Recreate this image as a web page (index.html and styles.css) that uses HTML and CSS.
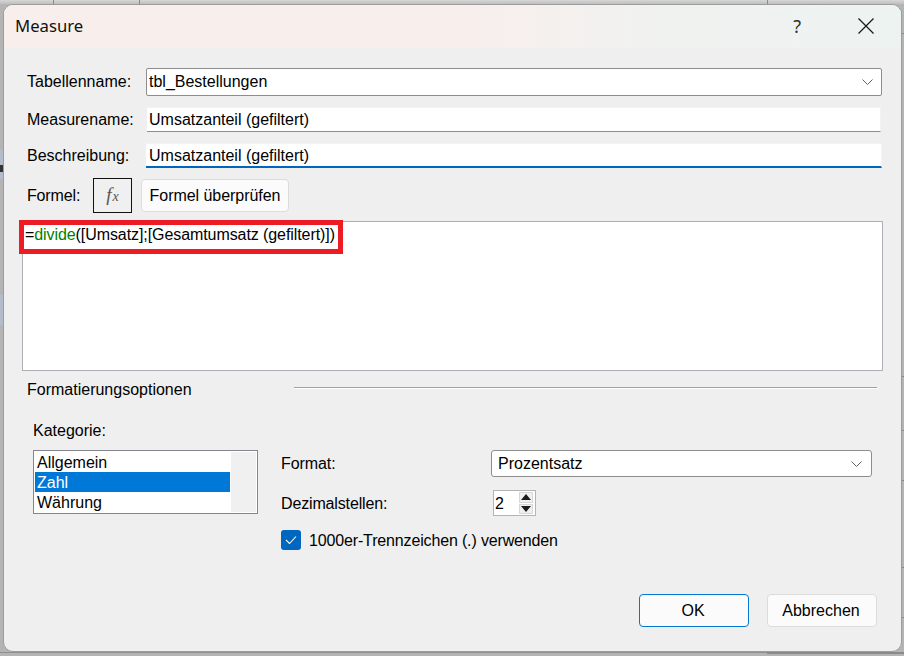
FILE: index.html
```html
<!DOCTYPE html>
<html lang="de">
<head>
<meta charset="utf-8">
<title>Measure</title>
<link rel="stylesheet" href="styles.css">
</head>
<body>
<div class="dialog">
  <header class="titlebar">
    <span class="title">Measure</span>
    <span class="help">?</span>
    <svg class="close" width="16" height="16" viewBox="0 0 16 16"><path d="M.5.5l15 15M15.5.5l-15 15" fill="none" stroke="#1c1c1c" stroke-width="1.3"/></svg>
  </header>
  <main class="form">
    <div class="row row-table">
      <label class="label">Tabellenname:</label>
      <div class="combo combo-wide">
        <span>tbl_Bestellungen</span>
        <svg class="chev" width="11" height="6" viewBox="0 0 11 6"><path d="M.5.5l5 5 5-5" fill="none" stroke="#606060"/></svg>
      </div>
    </div>
    <div class="row row-input">
      <label class="label">Measurename:</label>
      <div class="input">Umsatzanteil (gefiltert)</div>
    </div>
    <div class="row row-input">
      <label class="label">Beschreibung:</label>
      <div class="input input-focus">Umsatzanteil (gefiltert)</div>
    </div>
    <div class="row row-formula">
      <label class="label label-formula">Formel:</label>
      <div class="fx-btn"><span class="fx-f">f</span><span class="fx-x">x</span></div>
      <div class="btn btn-check">Formel überprüfen</div>
    </div>
    <div class="editor">
      <div class="code">=<span class="fn">divide</span>([Umsatz];[Gesamtumsatz (gefiltert)])</div>
      <div class="highlight"></div>
    </div>
    <div class="group-head">
      <span class="group-title">Formatierungsoptionen</span>
      <span class="group-line"></span>
    </div>
    <section class="options">
      <div class="cat-label">Kategorie:</div>
      <div class="options-body">
        <div class="listbox">
          <div class="items">
            <div class="item">Allgemein</div>
            <div class="item item-selected">Zahl</div>
            <div class="item">Währung</div>
          </div>
          <div class="track"></div>
        </div>
        <div class="settings">
          <div class="set-row set-format">
            <span class="set-label lab-format">Format:</span>
            <div class="combo combo-format">
              <span>Prozentsatz</span>
              <svg class="chev" width="11" height="6" viewBox="0 0 11 6"><path d="M.5.5l5 5 5-5" fill="none" stroke="#606060"/></svg>
            </div>
          </div>
          <div class="set-row set-dec">
            <span class="set-label lab-dec">Dezimalstellen:</span>
            <div class="spinner">
              <span class="spin-val">2</span>
              <div class="spin-btns">
                <div class="spin-btn"><i class="tri tri-up"></i></div>
                <div class="spin-btn"><i class="tri tri-down"></i></div>
              </div>
            </div>
          </div>
          <div class="set-row set-check">
            <span class="checkbox"><svg width="12" height="10" viewBox="0 0 12 10"><path d="M1 5l3.5 3.5L11 1.5" fill="none" stroke="#fff" stroke-width="1.1"/></svg></span>
            <span class="check-label">1000er-Trennzeichen (.) verwenden</span>
          </div>
        </div>
      </div>
    </section>
    <footer class="actions">
      <div class="btn btn-ok">OK</div>
      <div class="btn btn-cancel">Abbrechen</div>
    </footer>
  </main>
</div>
</body>
</html>
```
FILE: styles.css
```css
* { box-sizing: border-box; }
html, body { height: 100%; }
body {
  margin: 0;
  padding: 4px 2px 4px 3px;
  overflow: hidden;
  font: 16px/18px "Liberation Sans", Arial, sans-serif;
  color: #000;
  background:
    linear-gradient(#8a8a8a, #8a8a8a) 767px 652px / 137px 2px no-repeat,
    linear-gradient(#909090, #909090) 0 652px / 767px 1px no-repeat,
    linear-gradient(#8a8a8a, #8a8a8a) 53px 0 / 1px 4px no-repeat,
    linear-gradient(#8a8a8a, #8a8a8a) 139px 0 / 1px 4px no-repeat,
    linear-gradient(#8a8a8a, #8a8a8a) 767px 0 / 1px 4px no-repeat,
    linear-gradient(#333, #333) 0 165px / 3px 7px no-repeat,
    linear-gradient(#b4bccb, #b4bccb) 0 150px / 3px 29px no-repeat,
    linear-gradient(#b4bccb, #b4bccb) 0 295px / 3px 30px no-repeat,
    linear-gradient(#8a8a8a, #8a8a8a) 901px 33px / 3px 1px no-repeat,
    linear-gradient(#8a8a8a, #8a8a8a) 901px 376px / 3px 1px no-repeat,
    linear-gradient(#8a8a8a, #8a8a8a) 901px 430px / 3px 1px no-repeat,
    linear-gradient(#8a8a8a, #8a8a8a) 901px 480px / 3px 1px no-repeat,
    linear-gradient(#8a8a8a, #8a8a8a) 901px 567px / 3px 1px no-repeat,
    linear-gradient(#8a8a8a, #8a8a8a) 901px 617px / 3px 1px no-repeat,
    linear-gradient(#d6d6d6, #c2c2c2 70%, #b0b0b0) 0 0 / 100% 5px no-repeat,
    linear-gradient(#b4b4b4, #b4b4b4);
}
.dialog {
  width: 899px;
  height: 648px;
  border: 1px solid #9c9c9c;
  border-radius: 10px;
  background: #efefef;
  overflow: hidden;
}
.titlebar {
  position: relative;
  height: 43px;
  display: flex;
  align-items: center;
  padding: 0 0 2px 11px;
  background: linear-gradient(90deg, #f8efed 0%, #f8efed 52%, #f1f2f0 72%, #edf3f1 100%);
}
.title {
  font: 16.7px/20px "Noto Sans", "Open Sans", sans-serif;
  color: #111;
}
.help {
  margin-left: auto;
  margin-right: 57px;
  font: 18px/20px "Noto Sans", sans-serif;
  color: #333;
}
.close { margin-right: 27px; }
.form { padding: 20px 19px 0 23px; }
.row { display: flex; }
.row-table { height: 28px; }
.row-input { height: 25px; margin-top: 11px; }
.row-formula { height: 35px; margin-top: 10px; align-items: center; }
.label { width: 119px; line-height: 25px; }
.row-table .label { line-height: 28px; }
.label-formula { width: 66px; line-height: 35px; letter-spacing: -.15px; }
.combo {
  display: flex;
  align-items: center;
  justify-content: space-between;
  background: #fff;
  border: 1px solid #8d8d8d;
  padding: 0 8px 0 2px;
  line-height: 18px;
}
.combo-wide { width: 736px; height: 28px; border-radius: 2px; }
.combo-format { width: 381px; height: 27px; border-radius: 3px; padding-left: 6px; padding-right: 9px; }
.input {
  width: 734px;
  margin-left: 1px;
  background: #fff;
  border-top: 1px solid #f3f3f3;
  border-right: 1px solid #f3f3f3;
  border-bottom: 1px solid #8d8d8d;
  padding-left: 2px;
  line-height: 23px;
}
.input-focus { width: 736px; margin-left: 0; padding-left: 3px; border-bottom: 2px solid #0067c0; }
.fx-btn {
  display: flex;
  align-items: baseline;
  justify-content: center;
  width: 39px;
  height: 35px;
  border: 1px solid #111;
  background: #f0f0f0;
  font-family: "Liberation Serif", serif;
  font-style: italic;
  line-height: 31px;
  color: #555;
}
.fx-f { font-size: 19px; margin-right: 1px; }
.fx-x { font-size: 14px; }
.btn {
  display: flex;
  align-items: center;
  justify-content: center;
  background: #fbfbfb;
  border: 1px solid #dcdcdc;
  border-radius: 4px;
}
.btn-check { width: 148px; height: 33px; margin-left: 9px; letter-spacing: -.05px; }
.editor {
  position: relative;
  width: 861px;
  height: 150px;
  margin: 8px 0 0 -5px;
  background: #fff;
  border: 1px solid #aeaeb4;
}
.code { padding: 4px 0 0 2px; letter-spacing: -.08px; }
.fn { color: #007f00; }
.highlight {
  position: absolute;
  left: -4px;
  top: -2px;
  width: 324px;
  height: 34px;
  border: 5px solid #ed1c24;
}
.group-head { display: flex; align-items: center; height: 18px; margin-top: 10px; }
.group-title { width: 267px; }
.group-line {
  width: 583px;
  height: 2px;
  margin-top: -4px;
  background: #a0a0a0;
  border-bottom: 1px solid #fff;
}
.options { padding-left: 6px; margin-top: 23px; }
.cat-label { height: 18px; }
.options-body { display: flex; margin-top: 10px; }
.listbox {
  display: flex;
  width: 225px;
  height: 64px;
  padding: 1px;
  border: 1px solid #85858f;
  background: #fff;
}
.items { width: 195px; }
.item { height: 20px; padding: 1px 0 0 2px; line-height: 20px; }
.item-selected { background: #0078d7; color: #fff; }
.track { width: 25px; margin-left: 1px; background: #f0f0f0; }
.settings { margin-left: 23px; }
.set-row { display: flex; align-items: center; }
.set-format { height: 27px; }
.set-dec { height: 26px; margin-top: 13px; }
.set-check { height: 20px; margin-top: 14px; }
.lab-format { width: 210px; letter-spacing: -.08px; }
.lab-dec { width: 212px; letter-spacing: -.15px; padding-top: 1px; }
.spinner {
  display: flex;
  justify-content: space-between;
  width: 43px;
  height: 26px;
  padding: 1px;
  border: 1px solid #b4b4b4;
  background: #fff;
}
.spin-val { line-height: 24px; }
.spin-btns { display: flex; flex-direction: column; gap: 1px; width: 14px; margin-right: 1px; }
.spin-btn {
  display: flex;
  align-items: center;
  justify-content: center;
  height: 11px;
  background: #f0f0f0;
  border: 1px solid #d8d8d8;
}
.tri { width: 0; height: 0; border-left: 5px solid transparent; border-right: 5px solid transparent; }
.tri-up { border-bottom: 6px solid #1c1c1c; }
.tri-down { border-top: 6px solid #1c1c1c; }
.checkbox {
  display: flex;
  align-items: center;
  justify-content: center;
  width: 20px;
  height: 20px;
  border-radius: 3px;
  background: #0067c0;
}
.check-label { margin-left: 8px; padding-top: 1px; letter-spacing: -.15px; }
.actions { display: flex; justify-content: flex-end; gap: 18px; margin-top: 44px; padding-right: 5px; }
.btn-ok, .btn-cancel { width: 110px; height: 33px; }
.btn-cancel { padding-right: 2px; }
.btn-ok { border-color: #0078d4; padding-right: 2px; }
```
